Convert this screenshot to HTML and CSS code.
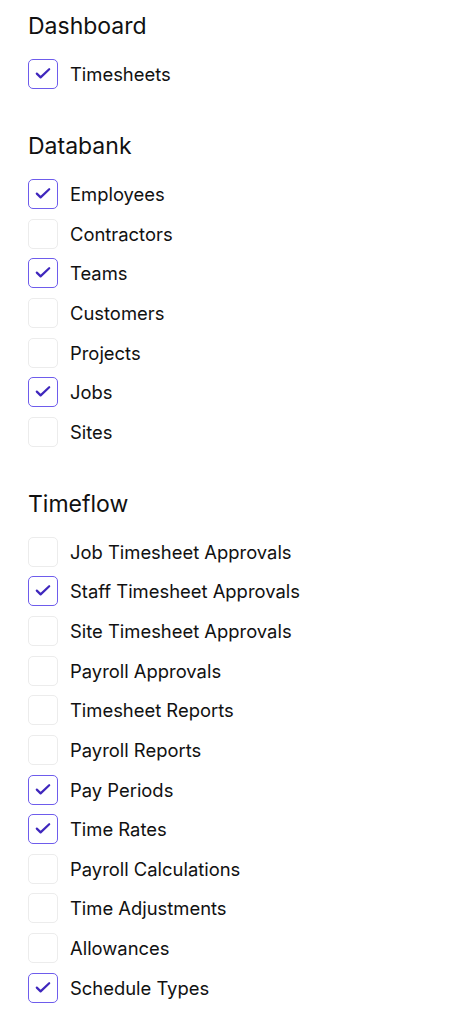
FILE: index.html
```html
<!DOCTYPE html>
<html>
<head>
<meta charset="utf-8">
<link rel="stylesheet" href="styles.css">
</head>
<body>
<div class="page">
  <section class="section">
    <h2 class="title">Dashboard</h2>
    <ul class="list">
      <li class="item"><span class="box on"><svg viewBox="0 0 27 27"><path d="M7.8 13.6 L11.6 17.4 L20.2 9.2"/></svg></span><span class="label">Timesheets</span></li>
    </ul>
  </section>
  <section class="section">
    <h2 class="title">Databank</h2>
    <ul class="list">
      <li class="item"><span class="box on"><svg viewBox="0 0 27 27"><path d="M7.8 13.6 L11.6 17.4 L20.2 9.2"/></svg></span><span class="label">Employees</span></li>
      <li class="item"><span class="box"></span><span class="label">Contractors</span></li>
      <li class="item"><span class="box on"><svg viewBox="0 0 27 27"><path d="M7.8 13.6 L11.6 17.4 L20.2 9.2"/></svg></span><span class="label">Teams</span></li>
      <li class="item"><span class="box"></span><span class="label">Customers</span></li>
      <li class="item"><span class="box"></span><span class="label">Projects</span></li>
      <li class="item"><span class="box on"><svg viewBox="0 0 27 27"><path d="M7.8 13.6 L11.6 17.4 L20.2 9.2"/></svg></span><span class="label">Jobs</span></li>
      <li class="item"><span class="box"></span><span class="label">Sites</span></li>
    </ul>
  </section>
  <section class="section">
    <h2 class="title">Timeflow</h2>
    <ul class="list">
      <li class="item"><span class="box"></span><span class="label">Job Timesheet Approvals</span></li>
      <li class="item"><span class="box on"><svg viewBox="0 0 27 27"><path d="M7.8 13.6 L11.6 17.4 L20.2 9.2"/></svg></span><span class="label">Staff Timesheet Approvals</span></li>
      <li class="item"><span class="box"></span><span class="label">Site Timesheet Approvals</span></li>
      <li class="item"><span class="box"></span><span class="label">Payroll Approvals</span></li>
      <li class="item"><span class="box"></span><span class="label">Timesheet Reports</span></li>
      <li class="item"><span class="box"></span><span class="label">Payroll Reports</span></li>
      <li class="item"><span class="box on"><svg viewBox="0 0 27 27"><path d="M7.8 13.6 L11.6 17.4 L20.2 9.2"/></svg></span><span class="label">Pay Periods</span></li>
      <li class="item"><span class="box on"><svg viewBox="0 0 27 27"><path d="M7.8 13.6 L11.6 17.4 L20.2 9.2"/></svg></span><span class="label">Time Rates</span></li>
      <li class="item"><span class="box"></span><span class="label">Payroll Calculations</span></li>
      <li class="item"><span class="box"></span><span class="label">Time Adjustments</span></li>
      <li class="item"><span class="box"></span><span class="label">Allowances</span></li>
      <li class="item"><span class="box on"><svg viewBox="0 0 27 27"><path d="M7.8 13.6 L11.6 17.4 L20.2 9.2"/></svg></span><span class="label">Schedule Types</span></li>
    </ul>
  </section>
</div>
</body>
</html>
```
FILE: styles.css
```css
html, body {
  margin: 0;
  padding: 0;
  background: #ffffff;
}
body {
  font-family: Inter, "Noto Sans", sans-serif;
  color: #111111;
}
.page {
  padding: 12px 28px 0 28px;
  display: flex;
  flex-direction: column;
  gap: 43px;
}
.section {
  display: flex;
  flex-direction: column;
  gap: 19px;
}
.title {
  margin: 0;
  font-size: 23px;
  line-height: 28px;
  font-weight: 400;
}
.list {
  list-style: none;
  margin: 0;
  padding: 0;
  display: flex;
  flex-direction: column;
  gap: 9.64px;
}
.item {
  display: flex;
  align-items: center;
  gap: 12px;
  height: 30px;
}
.box {
  width: 30px;
  height: 30px;
  box-sizing: border-box;
  border: 1.5px solid #ececec;
  border-radius: 5px;
  flex: none;
  display: flex;
}
.box.on {
  border-color: #6e5cec;
}
.box svg {
  width: 27px;
  height: 27px;
}
.box svg path {
  fill: none;
  stroke: #3f27bd;
  stroke-width: 2.2;
  stroke-linecap: round;
  stroke-linejoin: round;
}
.label {
  font-size: 18.4px;
  line-height: 24px;
}
```
